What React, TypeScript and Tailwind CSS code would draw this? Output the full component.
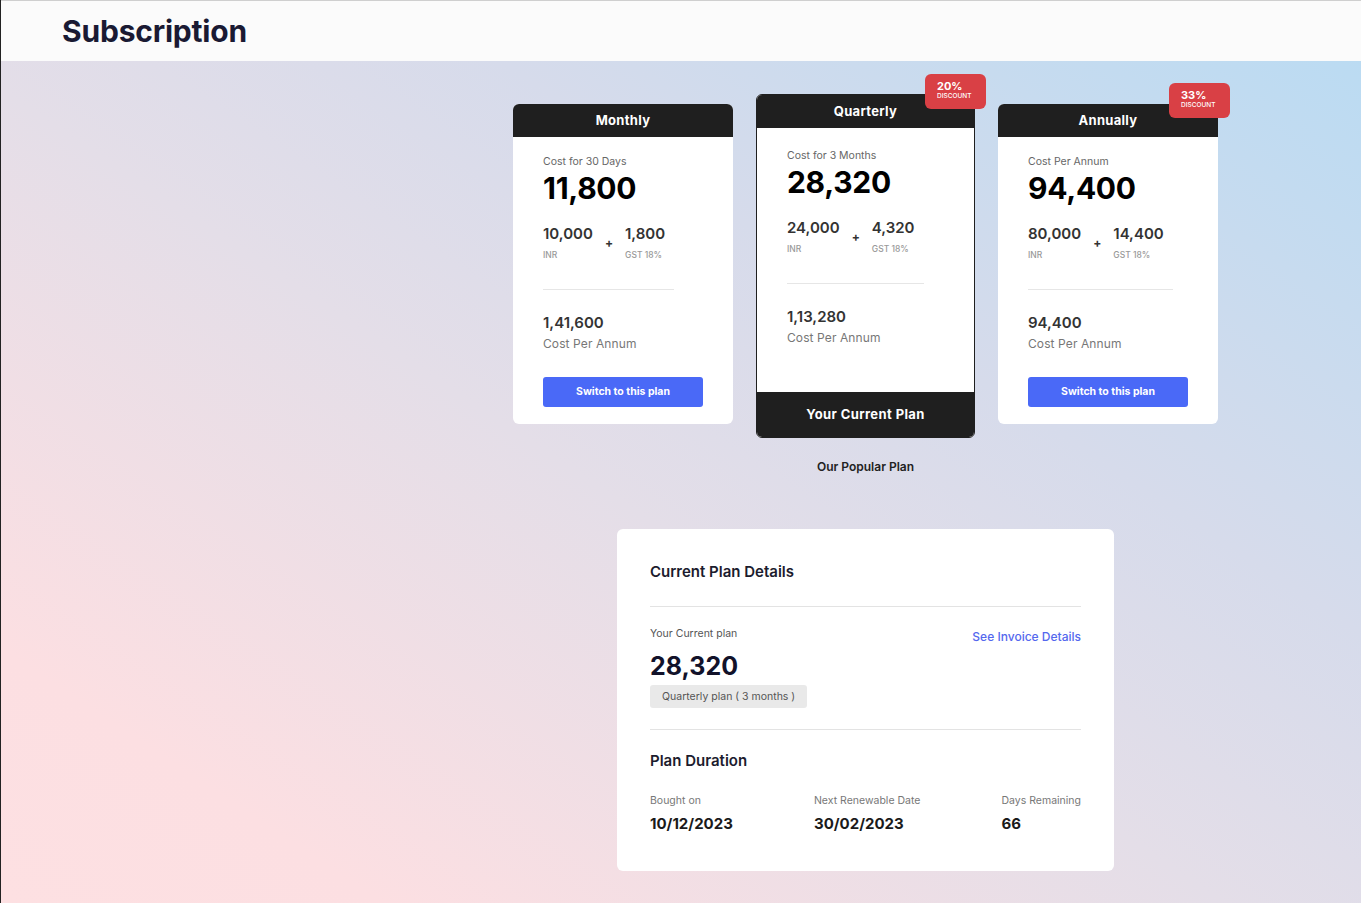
import React from 'react';

interface Plan {
  name: string;
  costLabel: string;
  total: string;
  base: string;
  gst: string;
  annual: string;
  discount?: string;
  current?: boolean;
}

const plans: Plan[] = [
  { name: 'Monthly', costLabel: 'Cost for 30 Days', total: '11,800', base: '10,000', gst: '1,800', annual: '1,41,600' },
  { name: 'Quarterly', costLabel: 'Cost for 3 Months', total: '28,320', base: '24,000', gst: '4,320', annual: '1,13,280', discount: '20%', current: true },
  { name: 'Annually', costLabel: 'Cost Per Annum', total: '94,400', base: '80,000', gst: '14,400', annual: '94,400', discount: '33%' },
];

const font = { fontFamily: 'Inter, "Liberation Sans", sans-serif' };

const DiscountBadge = ({ value }: { value: string }) => (
  <div className="absolute top-[-21px] right-[-12px] z-10 w-[61px] h-[35px] rounded-[6px] bg-[#d94045] pl-[12px] pt-[6px] text-white">
    <div className="text-[11px] leading-[12px] font-bold">{value}</div>
    <div className="text-[6.5px] leading-[9px] font-medium uppercase">Discount</div>
  </div>
);

const PlanBody = ({ plan }: { plan: Plan }) => (
  <>
    <div className="text-[10.5px] leading-[14px] text-[#666]">{plan.costLabel}</div>
    <div className="mt-px text-[30px] leading-[36px] font-bold text-black tracking-[-0.3px]">{plan.total}</div>
    <div className="w-fit">
      <div className="mt-[18px] flex items-center gap-3 pr-[9px]">
        <div>
          <div className="text-[15px] leading-[20px] font-semibold text-[#333]">{plan.base}</div>
          <div className="mt-[5px] text-[8.5px] leading-[12px] font-medium text-[#999]">INR</div>
        </div>
        <div className="text-[12px] font-bold text-[#333]">+</div>
        <div>
          <div className="text-[15px] leading-[20px] font-semibold text-[#333]">{plan.gst}</div>
          <div className="mt-[5px] text-[8.5px] leading-[12px] font-medium text-[#999]">GST 18%</div>
        </div>
      </div>
      <div className="mt-[28px] border-t border-[#e6e6e6]" />
    </div>
    <div className="mt-[23px] text-[15px] leading-[20px] font-semibold text-[#333]">{plan.annual}</div>
    <div className="mt-[3px] text-[12px] leading-[16px] text-[#777] tracking-[0.1px]">Cost Per Annum</div>
  </>
);

const PlanCard = ({ plan }: { plan: Plan }) => {
  if (plan.current) {
    return (
      <div className="relative w-[219px] rounded-[6px] border border-[#1f1f1f] bg-white">
        {plan.discount && <DiscountBadge value={plan.discount} />}
        <div className="h-[33px] rounded-t-[5px] bg-[#1f1f1f] flex items-center justify-center text-[13px] font-bold text-white tracking-[0.3px]">
          {plan.name}
        </div>
        <div className="px-[30px] pt-[21px] pb-[46px]">
          <PlanBody plan={plan} />
        </div>
        <div className="h-[45px] rounded-b-[5px] bg-[#1f1f1f] flex items-center justify-center text-[13px] font-bold text-white tracking-[0.4px]">
          Your Current Plan
        </div>
      </div>
    );
  }
  return (
    <div className="relative mt-[10px] w-[220px] rounded-[6px] bg-white">
      {plan.discount && <DiscountBadge value={plan.discount} />}
      <div className="h-[33px] rounded-t-[6px] bg-[#1f1f1f] flex items-center justify-center text-[13px] font-bold text-white tracking-[0.3px]">
        {plan.name}
      </div>
      <div className="px-[30px] pt-[18px] pb-[17px]">
        <PlanBody plan={plan} />
        <button className="mt-[25px] w-[160px] h-[30px] rounded-[3px] bg-[#4a69f7] text-[10.5px] font-bold text-white">
          Switch to this plan
        </button>
      </div>
    </div>
  );
};

export default function App() {
  return (
    <div
      style={font}
      className="min-h-screen border-l border-[#222] bg-[linear-gradient(to_top_right,#fde0e2_0%,#fcdfe2_14%,#e4dee8_45%,#d6dbeb_65%,#b8dbf3_100%)]"
    >
      <header className="h-[61px] border-t border-[#cfcfcf] bg-[#fbfbfb] flex items-center pl-[61px]">
        <h1 className="text-[30px] font-bold text-[#1a1a33] tracking-[-0.2px]">Subscription</h1>
      </header>

      <main className="pl-[369px] pt-[33px] pb-[32px] flex flex-col items-center">
        <div className="flex items-start gap-[23px]">
          {plans.map((p) => (
            <PlanCard key={p.name} plan={p} />
          ))}
        </div>
        <div className="mt-[21px] text-[12px] leading-[16px] font-semibold text-[#222]">Our Popular Plan</div>

        <section className="mt-[54px] w-[497px] rounded-[6px] bg-white px-[33px] pt-[33px] pb-[37px]">
          <h2 className="text-[15px] leading-[20px] font-semibold text-[#1c1c2e]">Current Plan Details</h2>
          <div className="mt-[24px] border-t border-[#e3e3e3]" />

          <div className="mt-[20px] flex items-start justify-between">
            <div>
              <div className="text-[10.5px] leading-[14px] text-[#555]">Your Current plan</div>
              <div className="mt-[9px] text-[25px] leading-[32px] font-bold text-[#12122a]">28,320</div>
              <div className="mt-[3px] inline-flex h-[23px] items-center rounded-[3px] bg-[#e9e9e9] px-[12px] text-[10.5px] text-[#555]">
                Quarterly plan ( 3 months )
              </div>
            </div>
            <a className="mt-[2px] text-[12px] leading-[16px] font-medium text-[#5468ee]">See Invoice Details</a>
          </div>

          <div className="mt-[21px] border-t border-[#e3e3e3]" />
          <h2 className="mt-[21px] text-[15px] leading-[20px] font-semibold text-[#1c1c2e]">Plan Duration</h2>

          <div className="mt-[23px] flex justify-between">
            {[
              ['Bought on', '10/12/2023'],
              ['Next Renewable Date', '30/02/2023'],
              ['Days Remaining', '66'],
            ].map(([label, value]) => (
              <div key={label}>
                <div className="text-[10.5px] leading-[14px] text-[#777]">{label}</div>
                <div className="mt-[6px] text-[15px] leading-[20px] font-bold text-[#1a1a1a]">{value}</div>
              </div>
            ))}
          </div>
        </section>
      </main>
    </div>
  );
}
